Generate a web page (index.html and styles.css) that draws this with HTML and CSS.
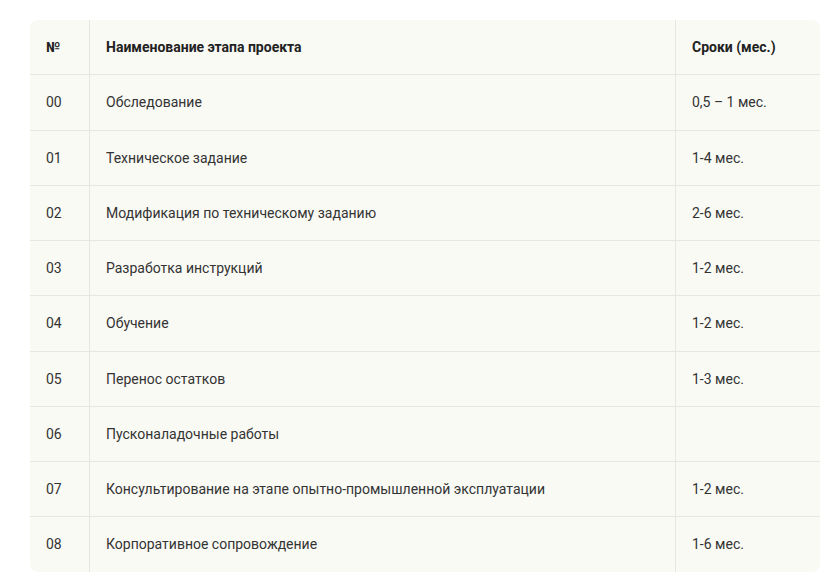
FILE: index.html
```html
<!DOCTYPE html>
<html lang="ru">
<head>
<meta charset="utf-8">
<link rel="stylesheet" href="styles.css">
</head>
<body>
<div class="wrap">
<table class="stages">
<thead>
<tr><th class="c-num">№</th><th class="c-name">Наименование этапа проекта</th><th class="c-term">Сроки (мес.)</th></tr>
</thead>
<tbody>
<tr><td>00</td><td>Обследование</td><td>0,5 – 1 мес.</td></tr>
<tr><td>01</td><td>Техническое задание</td><td>1-4 мес.</td></tr>
<tr><td>02</td><td>Модификация по техническому заданию</td><td>2-6 мес.</td></tr>
<tr><td>03</td><td>Разработка инструкций</td><td>1-2 мес.</td></tr>
<tr><td>04</td><td>Обучение</td><td>1-2 мес.</td></tr>
<tr><td>05</td><td>Перенос остатков</td><td>1-3 мес.</td></tr>
<tr><td>06</td><td>Пусконаладочные работы</td><td></td></tr>
<tr><td>07</td><td>Консультирование на этапе опытно-промышленной эксплуатации</td><td>1-2 мес.</td></tr>
<tr><td>08</td><td>Корпоративное сопровождение</td><td>1-6 мес.</td></tr>
</tbody>
</table>
</div>
</body>
</html>
```
FILE: styles.css
```css
html, body { margin: 0; padding: 0; background: #fff; }
body { font-family: Roboto, "Liberation Sans", sans-serif; color: #333; font-size: 14px; }
.wrap { padding: 20px 12px 16px 30px; }
.stages {
  width: 790px;
  border-collapse: collapse;
  background: #fafaf5;
  border-radius: 8px;
  overflow: hidden;
  table-layout: fixed;
}
.stages th, .stages td {
  text-align: left;
  padding: 17px 16px;
  line-height: 20.25px;
  vertical-align: middle;
}
.stages th { font-weight: 700; color: #222; }
.stages tr + tr td, .stages tbody tr:first-child td { border-top: 1px solid #e6e6e3; }
.stages th + th, .stages td + td { border-left: 1px solid #e6e6e3; }
.c-num { width: 27px; }
.c-term { width: 112px; }
```
